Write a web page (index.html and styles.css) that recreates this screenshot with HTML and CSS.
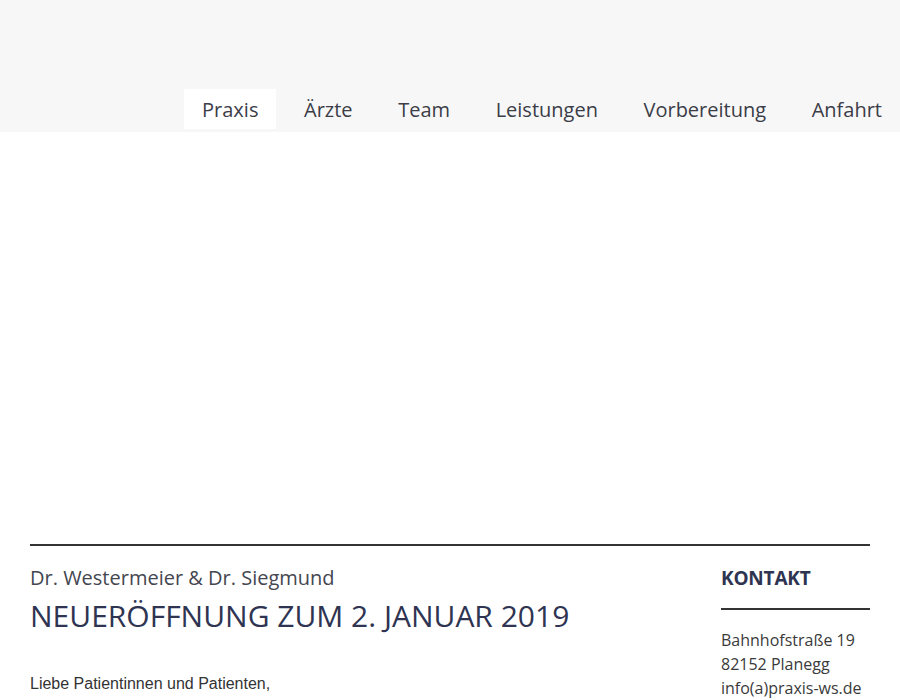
FILE: index.html
```html
<!DOCTYPE html>
<html lang="de">
<head>
<meta charset="utf-8">
<title>Praxis Dr. Westermeier & Dr. Siegmund</title>
<link rel="stylesheet" href="styles.css">
</head>
<body>
<header class="site-header">
  <nav class="main-nav">
    <a class="nav-item active" href="#">Praxis</a>
    <a class="nav-item" href="#">Ärzte</a>
    <a class="nav-item" href="#">Team</a>
    <a class="nav-item" href="#">Leistungen</a>
    <a class="nav-item" href="#">Vorbereitung</a>
    <a class="nav-item" href="#">Anfahrt</a>
  </nav>
</header>
<div class="hero"></div>
<main class="content">
  <div class="columns">
    <section class="main-col">
      <p class="subtitle">Dr. Westermeier &amp; Dr. Siegmund</p>
      <h1 class="headline">NEUERÖFFNUNG ZUM 2. JANUAR 2019</h1>
      <p class="body-text">Liebe Patientinnen und Patienten,</p>
    </section>
    <aside class="side-col">
      <h2 class="side-title">KONTAKT</h2>
      <div class="address">
        <div>Bahnhofstraße 19</div>
        <div>82152 Planegg</div>
        <div>info(a)praxis-ws.de</div>
      </div>
    </aside>
  </div>
</main>
</body>
</html>
```
FILE: styles.css
```css
html, body {
  margin: 0;
  padding: 0;
  background: #ffffff;
}
body {
  font-family: "Open Sans", "Liberation Sans", sans-serif;
  color: #333;
}
.site-header {
  background: #f7f7f8;
  height: 132px;
  display: flex;
  align-items: flex-end;
  justify-content: flex-end;
  padding-bottom: 3px;
  box-sizing: border-box;
}
.main-nav {
  display: flex;
  gap: 9.6px;
}
.nav-item {
  display: block;
  height: 40px;
  line-height: 42px;
  padding: 0 18px;
  font-size: 20px;
  color: #3b3d47;
  text-decoration: none;
}
.nav-item.active {
  background: #ffffff;
}
.hero {
  height: 412px;
}
.content {
  padding: 0 30px;
}
.columns {
  display: flex;
  border-top: 2px solid #333;
  justify-content: space-between;
}
.main-col {
  flex: 1;
}
.subtitle {
  margin: 18px 0 0;
  font-size: 20px;
  line-height: 28px;
  color: #444650;
}
.headline {
  margin: 4px 0 0;
  font-size: 30px;
  font-weight: 400;
  line-height: 40px;
  color: #2e3451;
}
.body-text {
  margin: 36px 0 0;
  font-family: "Liberation Sans", Arial, sans-serif;
  font-size: 16px;
  line-height: 24px;
  color: #333;
}
.side-col {
  width: 149px;
}
.side-title {
  margin: 0;
  padding: 18px 0 16px;
  font-size: 19px;
  font-weight: 700;
  letter-spacing: -0.2px;
  line-height: 28px;
  color: #2e3451;
  border-bottom: 2px solid #333;
}
.address {
  padding-top: 18px;
  font-size: 16px;
  line-height: 24px;
  color: #3a3a3a;
}
```
